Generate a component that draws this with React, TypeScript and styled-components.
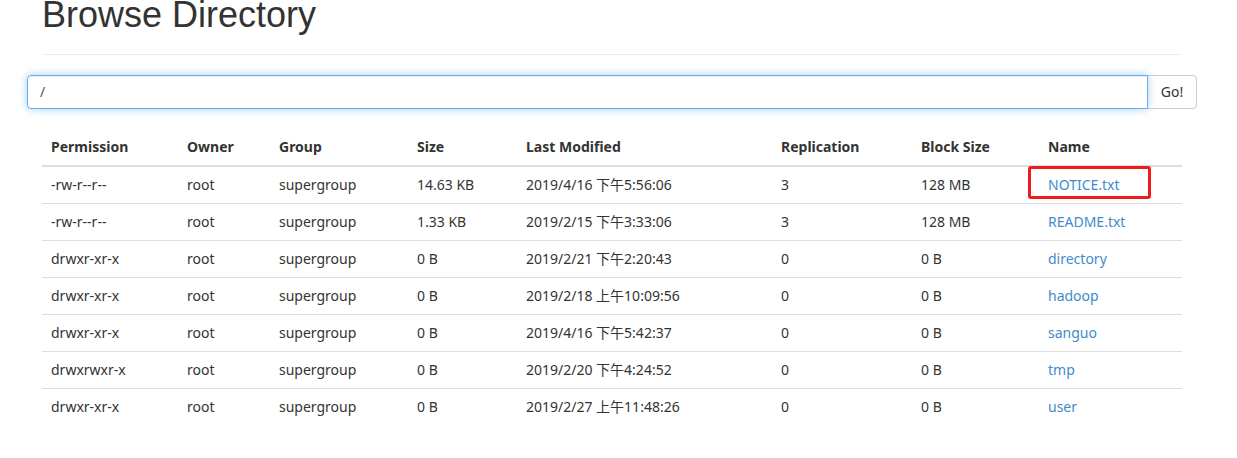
import React from "react";
import styled, { createGlobalStyle } from "styled-components";

const Global = createGlobalStyle`
  html, body { margin: 0; padding: 0; background: #fff; }
  body {
    font-family: "Noto Sans", "Noto Sans CJK SC", sans-serif;
    font-size: 14px;
    line-height: 20px;
    color: #333;
  }
`;

const Page = styled.div`
  width: 1170px;
  margin-left: 27px;
`;

const Header = styled.div`
  margin: 0 15px 20px;
  padding-bottom: 9px;
  border-bottom: 1px solid #eee;
`;

const Title = styled.h1`
  margin: -5px 0 10px;
  font-family: "Liberation Sans", Arial, sans-serif;
  font-size: 36px;
  font-weight: 400;
  line-height: 1.1;
  color: #333;
`;

const InputGroup = styled.div`
  display: flex;
  height: 34px;
`;

const PathInput = styled.input`
  flex: 1;
  box-sizing: border-box;
  height: 34px;
  padding: 6px 12px;
  font-family: inherit;
  font-size: 14px;
  color: #555;
  border: 1px solid #66afe9;
  border-radius: 4px 0 0 4px;
  outline: none;
  box-shadow: inset 0 1px 1px rgba(0, 0, 0, 0.075), 0 0 8px rgba(102, 175, 233, 0.6);
  position: relative;
  z-index: 1;
`;

const GoButton = styled.button`
  box-sizing: border-box;
  width: 50px;
  height: 34px;
  margin-left: -1px;
  padding: 6px 10px;
  font-family: inherit;
  font-size: 14px;
  color: #333;
  background: #fff;
  border: 1px solid #ccc;
  border-radius: 0 4px 4px 0;
`;

const Table = styled.table`
  width: 1140px;
  margin: 20px 15px 0;
  border-collapse: collapse;
  border-spacing: 0;
  table-layout: fixed;
`;

const Th = styled.th`
  padding: 8px 8px 8px 9px;
  text-align: left;
  font-weight: 700;
  line-height: 20px;
  border-bottom: 2px solid #ddd;
`;

const Td = styled.td`
  position: relative;
  padding: 8px 8px 8px 9px;
  line-height: 20px;
  border-top: 1px solid #ddd;
  white-space: nowrap;
`;

const Link = styled.a`
  color: #428bca;
  text-decoration: none;
`;

const Highlight = styled.span`
  position: absolute;
  left: -11px;
  top: -1px;
  width: 123px;
  height: 33px;
  box-sizing: border-box;
  border: 3px solid #ee1c1c;
  border-radius: 3px;
  pointer-events: none;
`;

const widths = [136, 92, 138, 109, 255, 140, 127, 143];
const heads = ["Permission", "Owner", "Group", "Size", "Last Modified", "Replication", "Block Size", "Name"];

const rows = [
  ["-rw-r--r--", "root", "supergroup", "14.63 KB", "2019/4/16 下午5:56:06", "3", "128 MB", "NOTICE.txt"],
  ["-rw-r--r--", "root", "supergroup", "1.33 KB", "2019/2/15 下午3:33:06", "3", "128 MB", "README.txt"],
  ["drwxr-xr-x", "root", "supergroup", "0 B", "2019/2/21 下午2:20:43", "0", "0 B", "directory"],
  ["drwxr-xr-x", "root", "supergroup", "0 B", "2019/2/18 上午10:09:56", "0", "0 B", "hadoop"],
  ["drwxr-xr-x", "root", "supergroup", "0 B", "2019/4/16 下午5:42:37", "0", "0 B", "sanguo"],
  ["drwxrwxr-x", "root", "supergroup", "0 B", "2019/2/20 下午4:24:52", "0", "0 B", "tmp"],
  ["drwxr-xr-x", "root", "supergroup", "0 B", "2019/2/27 上午11:48:26", "0", "0 B", "user"],
];

export default function App() {
  return (
    <>
      <Global />
      <Page>
        <Header>
          <Title>Browse Directory</Title>
        </Header>
        <InputGroup>
          <PathInput defaultValue="/" />
          <GoButton>Go!</GoButton>
        </InputGroup>
        <Table>
          <colgroup>
            {widths.map((w, i) => (
              <col key={i} style={{ width: w }} />
            ))}
          </colgroup>
          <thead>
            <tr>
              {heads.map((h) => (
                <Th key={h}>{h}</Th>
              ))}
            </tr>
          </thead>
          <tbody>
            {rows.map((r, ri) => (
              <tr key={ri}>
                {r.slice(0, 7).map((c, ci) => (
                  <Td key={ci}>{c}</Td>
                ))}
                <Td>
                  {ri === 0 && <Highlight />}
                  <Link href="#">{r[7]}</Link>
                </Td>
              </tr>
            ))}
          </tbody>
        </Table>
      </Page>
    </>
  );
}
